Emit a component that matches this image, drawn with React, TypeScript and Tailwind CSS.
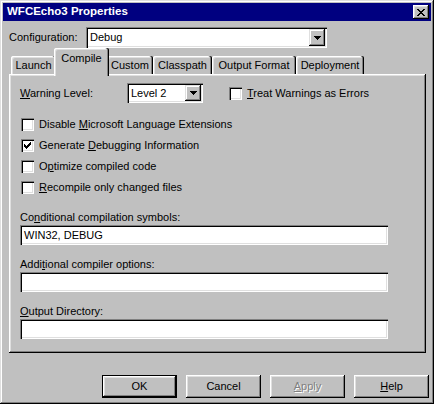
import React from "react";

const SUNKEN =
  "shadow-[inset_1px_1px_#808080,inset_2px_2px_#000,inset_-1px_-1px_#fff,inset_-2px_-2px_#dfdfdf]";
const RAISED =
  "shadow-[inset_-1px_-1px_#000,inset_1px_1px_#fff,inset_-2px_-2px_#808080,inset_2px_2px_#dfdfdf]";
const COMBO_BTN =
  "shadow-[inset_-1px_-1px_#000,inset_1px_1px_#dfdfdf,inset_-2px_-2px_#808080,inset_2px_2px_#fff]";

function Arrow() {
  return (
    <svg width="7" height="4" viewBox="0 0 7 4" shapeRendering="crispEdges">
      <path d="M0 0h7v1h-1v1h-1v1h-1v1h-1v-1h-1v-1h-1v-1h-1z" fill="#000" />
    </svg>
  );
}

function Combo({ value, className }: { value: string; className: string }) {
  return (
    <div className={`${SUNKEN} bg-white flex p-[2px] ${className}`}>
      <span className="flex-1 pl-[2px] flex items-center leading-[13px]">{value}</span>
      <span className={`${COMBO_BTN} w-[16px] bg-[#c0c0c0] flex items-center justify-center`}>
        <Arrow />
      </span>
    </div>
  );
}

function CheckBox({ checked }: { checked?: boolean }) {
  return (
    <span className={`${SUNKEN} w-[13px] h-[13px] bg-white shrink-0 flex items-center justify-center`}>
      {checked && (
        <svg width="7" height="7" viewBox="0 0 7 7" shapeRendering="crispEdges">
          <path
            d="M6 0h1v3h-1v1h-1v1h-1v1h-1v1h-1v-1h-1v-1h-1v-3h1v1h1v1h1v-1h1v-1h1z"
            fill="#000"
          />
        </svg>
      )}
    </span>
  );
}

function CheckRow({ children, checked }: { children: React.ReactNode; checked?: boolean }) {
  return (
    <div className="flex items-center gap-[5px] h-[13px] ml-[1px]">
      <CheckBox checked={checked} />
      <span className="leading-[13px] whitespace-nowrap">{children}</span>
    </div>
  );
}

const TAB =
  "shadow-[inset_-1px_0_#000,inset_-2px_0_#808080,inset_1px_1px_#fff,inset_2px_2px_#dfdfdf] rounded-tl-[2px] rounded-tr-[2px] bg-[#c0c0c0] flex justify-center whitespace-nowrap leading-[13px]";

const tabs = [
  { label: "Launch", w: "w-[45px]" },
  { label: "Compile", w: "w-[51px]" },
  { label: "Custom", w: "w-[46px]" },
  { label: "Classpath", w: "w-[59px]" },
  { label: "Output Format", w: "w-[84px]" },
  { label: "Deployment", w: "w-[68px]" },
];

function Field({ label, value }: { label: React.ReactNode; value?: string }) {
  return (
    <div className="flex flex-col">
      <span className="leading-[13px] h-[13px]">{label}</span>
      <div className={`${SUNKEN} bg-white mt-[1px] h-[20px] w-[368px] flex items-center pl-[4px] leading-[13px]`}>
        {value}
      </div>
    </div>
  );
}

function Button({ children, isDefault, disabled }: { children: React.ReactNode; isDefault?: boolean; disabled?: boolean }) {
  return (
    <div
      className={`w-[75px] h-[23px] bg-[#c0c0c0] flex ${isDefault ? "border border-black" : ""}`}
    >
      <div
        className={`${RAISED} flex-1 flex items-center justify-center leading-[13px] ${
          disabled ? "text-[#808080] [text-shadow:1px_1px_0_#fff]" : ""
        }`}
      >
        {children}
      </div>
    </div>
  );
}

export default function App() {
  return (
    <div className="w-[434px] h-[404px] bg-[#c0c0c0] p-[3px] flex flex-col text-[11px] text-black [font-family:'Liberation_Sans',Arial,sans-serif] shadow-[inset_-1px_-1px_#000,inset_1px_1px_#dfdfdf,inset_-2px_-2px_#808080,inset_2px_2px_#fff]">
      {/* title bar */}
      <div className="h-[18px] bg-[#000080] flex items-center justify-between pl-[4px] pr-[2px]">
        <span className="text-white font-bold text-[11.5px] leading-none">WFCEcho3 Properties</span>
        <span className={`${RAISED} w-[16px] h-[14px] bg-[#c0c0c0] flex items-center justify-center`}>
          <svg width="8" height="7" viewBox="0 0 8 7" shapeRendering="crispEdges">
            <path
              d="M0 0h2v1h1v1h2v-1h1v-1h2v1h-1v1h-1v1h-1v1h1v1h1v1h1v1h-2v-1h-1v-1h-2v1h-1v1h-2v-1h1v-1h1v-1h1v-1h-1v-1h-1v-1h-1z"
              fill="#000"
            />
          </svg>
        </span>
      </div>

      {/* configuration */}
      <div className="flex items-center mt-[6px] pl-[6px] h-[21px]">
        <span className="w-[77px] leading-[13px]">
          Confi<u>g</u>uration:
        </span>
        <Combo value="Debug" className="w-[241px] h-[21px]" />
      </div>

      {/* tabs + panel */}
      <div className="mt-[4px] ml-[6px] w-[417px] flex flex-col">
        <div className="flex items-end h-[22px] pl-[2px]">
          {tabs.map((t) =>
            t.label === "Compile" ? (
              <div
                key={t.label}
                className={`${TAB} ${t.w} h-[24px] -mx-[2px] -mb-[2px] box-content px-[2px] pt-[4px] relative z-10`}
              >
                {t.label}
              </div>
            ) : (
              <div key={t.label} className={`${TAB} ${t.w} h-[18px] pt-[3px]`}>
                {t.label}
              </div>
            )
          )}
        </div>
        <div className="h-[279px] shadow-[inset_-1px_-1px_#000,inset_1px_1px_#fff,inset_-2px_-2px_#808080,inset_2px_2px_#dfdfdf] pl-[11px] pt-[9px] flex flex-col">
          <div className="flex items-center h-[20px]">
            <span className="w-[107px] leading-[13px]">
              <u>W</u>arning Level:
            </span>
            <Combo value="Level 2" className="w-[76px] h-[20px]" />
            <div className="ml-[26px] flex items-center gap-[5px]">
              <CheckBox />
              <span className="leading-[13px]">
                <u>T</u>reat Warnings as Errors
              </span>
            </div>
          </div>

          <div className="mt-[15px] flex flex-col gap-[8px]">
            <CheckRow>
              Disable <u>M</u>icrosoft Language Extensions
            </CheckRow>
            <CheckRow checked>
              Generate <u>D</u>ebugging Information
            </CheckRow>
            <CheckRow>
              O<u>p</u>timize compiled code
            </CheckRow>
            <CheckRow>
              <u>R</u>ecompile only changed files
            </CheckRow>
          </div>

          <div className="mt-[17px] flex flex-col gap-[13px]">
            <Field
              label={
                <>
                  Co<u>n</u>ditional compilation symbols:
                </>
              }
              value="WIN32, DEBUG"
            />
            <Field
              label={
                <>
                  Addi<u>t</u>ional compiler options:
                </>
              }
            />
            <Field
              label={
                <>
                  <u>O</u>utput Directory:
                </>
              }
            />
          </div>
        </div>
      </div>

      {/* buttons */}
      <div className="mt-[22px] flex justify-end gap-[9px] pr-[2px]">
        <Button isDefault>OK</Button>
        <Button>Cancel</Button>
        <Button disabled>
          <u>A</u>pply
        </Button>
        <Button>
          <u>H</u>elp
        </Button>
      </div>
    </div>
  );
}
